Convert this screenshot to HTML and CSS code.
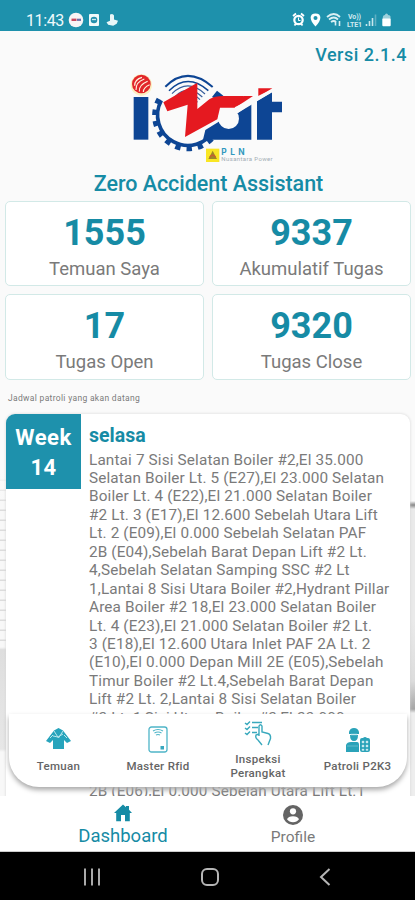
FILE: index.html
```html
<!DOCTYPE html>
<html lang="id">
<head>
<meta charset="utf-8">
<meta name="viewport" content="width=device-width, initial-scale=1">
<title>Zero Accident Assistant</title>
<link rel="stylesheet" href="styles.css">
</head>
<body>
<header class="status">
  <span class="time">11:43</span>
  <svg class="status-left" width="52" height="16" viewBox="0 0 52 16">
    <circle cx="8" cy="8" r="7.3" fill="#f7f4f5"/>
    <path d="M3.5 7.8h5" stroke="#c6485c" stroke-width="2.4"/><path d="M9 7.8h4" stroke="#6d6da8" stroke-width="2.2"/>
    <rect x="21" y="2" width="10" height="12" rx="1" fill="#f2fafb"/>
    <circle cx="26" cy="8" r="3.3" fill="#2590ad"/><path d="M24 7.5h4" stroke="#cceaf0" stroke-width="1.3"/>
    <path d="M42 2.500q3-1.500 4 1v4l4 1.300-1.300 3-3.500 2-5-1-1.700-2.500 3.500-1.500z" fill="#e8f6f8"/>
  </svg>
  <svg class="status-right" width="100" height="16" viewBox="0 0 100 16" fill="none">
    <path d="M1 4l3-2.500M12 4L9 1.500M2.500 13.500l1.500-2M10.500 13.500l-1.500-2" stroke="#fff" stroke-width="1.800"/>
    <circle cx="6.500" cy="8" r="4.200" stroke="#fff" stroke-width="2.200"/><path d="M6.500 5.500v3h2" stroke="#fff"/>
    <path d="M23.500 1.500c-6.500 0-6.500 6.500 0 13 6.500-6.500 6.500-13 0-13z" fill="#fff"/><circle cx="23.500" cy="6" r="2" fill="#1e91ac"/>
    <path d="M35 5q7-6 13 0M37 7.500q5-4 9 0M39 10q3-2 5 0" stroke="#d8eff3" stroke-width="1.800"/><path d="M43.500 9.500v4M47.500 9v5" stroke="#d8eff3" stroke-width="1.600"/>
    <g fill="#d0e9ef" font-family="Roboto, sans-serif" font-weight="700" font-size="7"><text x="56" y="6.500" textLength="13">Vo))</text><text x="55" y="14.500" textLength="15">LTE1</text></g>
    <path d="M74.500 14v-2M77.500 14v-5M80.500 14V6" stroke="#c8e7ed" stroke-width="1.600"/><path d="M83.500 14V2.500" stroke="#5eafc2" stroke-width="1.600"/>
    <path d="M91 4.500q0-1.500 2-1.500 0-1.500 1.500-1.500T96 3q2.500 0 2.500 1.500V7h-8z" fill="#9dd0db"/><rect x="90.300" y="6.500" width="8.400" height="7.800" rx="1" fill="#fff"/>
  </svg>
</header>

<main class="content">
  <p class="version">Versi 2.1.4</p>
  <svg class="logo" width="175" height="105" viewBox="0 0 525 315">
    <circle cx="64" cy="60" r="32" fill="#fbefc0"/>
    <circle cx="64" cy="57" r="28" fill="#e2262a"/>
    <g fill="none" stroke="#fff3de" stroke-width="3.500"><path d="M44 62q0-19 22-25M48 75q-1-24 25-33M58 80q-2-20 25-31M70 81q0-14 19-22"/></g>
    <rect x="41" y="96" width="44" height="128" fill="#0d4594"/>
    <path d="M124 106A89 89 0 0 0 284 194" fill="none" stroke="#0d4594" stroke-width="11"/>
    <path d="M117 102A97 97 0 0 0 291 201" fill="none" stroke="#0d4594" stroke-width="15" stroke-dasharray="16 18"/>
    <path d="M276 96l15-19 19 15-10 12-14-3z" fill="#0d4594"/>
    <g fill="none" stroke="#0d4594" stroke-width="6">
      <path d="M136 65Q202 0 278 66"/><path d="M147 77Q203 22 265 77" stroke-width="4.500"/>
      <g stroke="#375e9c" stroke-width="3.500"><path d="M156 86Q203 39 255 87M166 94Q205 56 247 96M176 100Q206 72 240 104M232 112q-10-17-22-17M230 120q-6-14-18-15"/></g>
    </g>
    <path d="M130 112L232 53V132L268 103Q285 93 310 93H371V103L345 128H300L292 163 195 216 203 119 142 139z" fill="#e51920"/>
    <path d="M256 195L300 168 345 150 394 116V224H249z" fill="#0d4594"/>
    <path d="M411 224V108L456 82V110H486V142H456V224z" fill="#0d4594"/>
    <path d="M371 93h28l-50 33-12-6z" fill="#e51920"/>
    <path d="M415 70h42l-42 26z" fill="#e51920"/>
    <circle cx="326" cy="161" r="31" fill="#fafafa"/>
    <path d="M344 127L461 70v9l-107 64z" fill="#fafafa"/>
    <rect x="258" y="251" width="40" height="40" fill="#f9e624"/>
    <path d="M278 257l13 25h-26z" fill="#9d8728"/><path d="M269 277q9-13 18 0" fill="none" stroke="#c95c31" stroke-width="4"/>
    <text x="304" y="270" font-family="Inter, sans-serif" font-weight="700" font-size="25" textLength="70" fill="#3199bf">PLN</text>
    <text x="304" y="289" font-family="Roboto, sans-serif" font-size="18" textLength="154" fill="#a3adb5">Nusantara Power</text>
  </svg>
  <h1 class="title">Zero Accident Assistant</h1>

  <section class="stats">
    <article class="stat"><strong>1555</strong><span>Temuan Saya</span></article>
    <article class="stat"><strong>9337</strong><span>Akumulatif Tugas</span></article>
    <article class="stat"><strong>17</strong><span>Tugas Open</span></article>
    <article class="stat"><strong>9320</strong><span>Tugas Close</span></article>
  </section>

  <p class="caption">Jadwal patroli yang akan datang</p>

  <section class="schedule">
    <div class="week">Week<br>14</div>
    <div class="detail">
      <h2>selasa</h2>
      <p>Lantai 7 Sisi Selatan Boiler #2,El 35.000<br>Selatan Boiler Lt. 5 (E27),El 23.000 Selatan<br>Boiler Lt. 4 (E22),El 21.000 Selatan Boiler<br>#2 Lt. 3 (E17),El 12.600 Sebelah Utara Lift<br>Lt. 2 (E09),El 0.000 Sebelah Selatan PAF<br>2B (E04),Sebelah Barat Depan Lift #2 Lt.<br>4,Sebelah Selatan Samping SSC #2 Lt<br>1,Lantai 8 Sisi Utara Boiler #2,Hydrant Pillar<br>Area Boiler #2 18,El 23.000 Selatan Boiler<br>Lt. 4 (E23),El 21.000 Selatan Boiler #2 Lt.<br>3 (E18),El 12.600 Utara Inlet PAF 2A Lt. 2<br>(E10),El 0.000 Depan Mill 2E (E05),Sebelah<br>Timur Boiler #2 Lt.4,Sebelah Barat Depan<br>Lift #2 Lt. 2,Lantai 8 Sisi Selatan Boiler<br>#2 Lt. 1,Sisi Utara Boiler #2,El 23.000</p>
      <p class="tail">2B (E06),El 0.000 Sebelah Utara Lift Lt.1</p>
    </div>
  </section>

  <nav class="actions">
    <a class="a-temuan">
      <svg width="27" height="27" viewBox="0 0 27 27"><path d="M9 4.500L13.500 2 18 4.500l8 10.500-4 2-3-3v9H8v-9l-3 3-4-2z" fill="#27a4bc"/><path d="M9 5l4.500 7L18 5M8 10l5 1 5-3M5 12l3-3M22 12l-3-3" fill="none" stroke="#b9e6ec" stroke-width="1"/></svg>
      <span>Temuan</span>
    </a>
    <a class="a-rfid">
      <svg width="20" height="27" viewBox="0 0 20 27" fill="none" stroke="#4fb5c8"><rect x="1" y="1" width="18" height="25" rx="2.500" stroke-width="1.300"/><path d="M5 5q5-3 10 0M6.500 7q3.500-2 7 0M8 9q2-1 4 0" stroke-width="1.100"/><rect x="12.500" y="20" width="3.500" height="3.500" fill="#38a8bf" stroke="none"/></svg>
      <span>Master Rfid</span>
    </a>
    <a class="a-inspeksi">
      <svg width="28" height="27" viewBox="0 0 28 27" fill="none" stroke="#39a9bd" stroke-width="1.400"><path d="M1 3l2 1.500L6 1.500M1 8l2 1.500L6 6.500M1 13l2 1.500L6 11.500M8 2.500h10M8 7.500h6M8 12.500h5"/><path d="M15 16V6q1.500-2.500 3 0v6l6 1.500q3 1 2.500 5L24 25M15 14l-3 1q-1 3 2 5l4 5"/></svg>
      <span>Inspeksi<br>Perangkat</span>
    </a>
    <a class="a-patroli">
      <svg width="26" height="26" viewBox="0 0 26 26" fill="#2ba3b9"><path d="M4 5q1-4 5-4t5 4v2H4zM5 8h8q0 6-4 6T5 8zM1 25v-7q1-3 5-3h6q2 0 2 3v7zM15 13q0-2 2-2h1q2-2 4 0h1q2 0 2 2v10q0 2-2 2h-6q-2 0-2-2z"/><path d="M17 14h2v2h-2zM21 14h2v2h-2zM17 18h2v2h-2zM21 18h2v2h-2zM17 22h2v1.500h-2zM21 22h2v1.500h-2zM2 19h11M6 7h6v1H6z" fill="#d2eef2" stroke="#b9e1e8" stroke-width=".4"/></svg>
      <span>Patroli P2K3</span>
    </a>
  </nav>
</main>

<nav class="tabs">
  <a class="tab active">
    <svg width="20" height="20" viewBox="0 0 20 20"><path d="M10 1.500l3 2.700V3h3v3.800l3 3.200h-2.200v8.300H12V12H8v6.300H3.200V10H1z" fill="#168ba5"/></svg>
    <span>Dashboard</span>
  </a>
  <a class="tab">
    <svg width="22" height="22" viewBox="0 0 22 22"><circle cx="11" cy="11" r="10" fill="#646464"/><circle cx="11" cy="7.300" r="3.100" fill="#fff"/><path d="M5 15.200q1.200-3 6-3t6 3q-2.200 3-6 3t-6-3z" fill="#fff"/></svg>
    <span>Profile</span>
  </a>
</nav>

<footer class="system">
  <svg width="18" height="20" viewBox="0 0 18 20"><path d="M2 1.500v17M9 1.500v17M16 1.500v17" stroke="#aaa" stroke-width="2"/></svg>
  <svg width="20" height="20" viewBox="0 0 20 20"><rect x="2" y="2" width="16" height="16" rx="5" fill="none" stroke="#b5b5b5" stroke-width="2"/></svg>
  <svg width="14" height="20" viewBox="0 0 14 20"><path d="M11.500 2L3 10l8.500 8" fill="none" stroke="#b5b5b5" stroke-width="2"/></svg>
</footer>
</body>
</html>
```

FILE: styles.css
```css
* { box-sizing: border-box; }
body {
  margin: 0;
  height: 900px;
  display: grid;
  grid-template-rows: 31px 765px 56px 48px;
  overflow: hidden;
  font-family: Roboto, "Liberation Sans", sans-serif;
  color: #7a7a7a;
}
h1, h2, p { margin: 0; }

.status {
  display: flex;
  align-items: center;
  padding: 9px 24px 0 26px;
  background: #1e91ac;
  color: #eef9fb;
}
.time { width: 42px; font-size: 16px; line-height: 20px; letter-spacing: -.4px; padding-top: 1px; }
.status-right { margin-left: auto; }

.content {
  position: relative;
  overflow: hidden;
  padding: 0 4px 0 5px;
  background:
    linear-gradient(#fafafa 0 440px, transparent 475px) 0 0 / 7px 100% no-repeat,
    linear-gradient(transparent 616px, #dedede 619px, #e7e7e7 718px, #f8f8f8 721px) 0 0 / 7px 100% no-repeat,
    linear-gradient(#fafafa 470px, #888 474px, #eaeaea 478px 590px, #dcdcdc 650px, #a5a5a5 678px, #eee 682px) 100% 0 / 7px 100% no-repeat,
    repeating-linear-gradient(#f8f8f8 0 8px, #dcdcdc 9px 10px) 0 0 / 7px 100% no-repeat,
    #fafafa;
}
.version {
  height: 40px;
  padding: 12px 5px 0 0;
  text-align: right;
  font-size: 18px;
  line-height: 24px;
  font-weight: 500;
  letter-spacing: .5px;
  color: #168ba5;
}
.logo { display: block; margin: -6px auto 0 115px; }
.title {
  height: 31px;
  text-align: center;
  font-size: 21.500px;
  line-height: 27px;
  font-weight: 500;
  letter-spacing: -.03px;
  color: #168ba5;
}
.stats {
  display: grid;
  grid-template-columns: 199px 199px;
  grid-template-rows: 85px 86px;
  gap: 8px;
}
.stat {
  display: flex;
  flex-direction: column;
  align-items: center;
  border: 1px solid #d2e9e7;
  border-radius: 5px;
  background: #fff;
}
.stat strong { margin-top: 10px; font-size: 36px; line-height: 43px; font-weight: 700; color: #168ba5; }
.stat span { margin-top: 3px; font-size: 18.500px; line-height: 22px; }
.caption { height: 34px; padding: 12px 0 0 3px; font-size: 8.500px; line-height: 13px; letter-spacing: .32px; }

.schedule {
  display: flex;
  width: 404px;
  height: 410px;
  margin-left: 1px;
  border-radius: 9px 9px 0 0;
  background: #fff;
  box-shadow: 0 0 3px #d3d3d3;
}
.week {
  flex: none;
  width: 75px;
  height: 75px;
  padding-top: 9px;
  border-top-left-radius: 9px;
  background: #1e91ac;
  color: #fff;
  text-align: center;
  font-size: 22px;
  line-height: 30px;
  font-weight: 700;
  letter-spacing: .5px;
}
.detail { padding: 10px 0 0 8px; white-space: nowrap; }
.detail h2 { font-size: 19.500px; line-height: 23px; font-weight: 700; color: #168ba5; }
.detail p { margin-top: 3.500px; font-size: 15.300px; line-height: 18.460px; letter-spacing: .15px; }
.detail .tail { margin-top: 55px; }

.actions {
  position: absolute;
  left: 9px;
  top: 683px;
  width: 398px;
  height: 73px;
  display: grid;
  grid-template-columns: 99px 100px 100px 99px;
  border-radius: 0 0 30px 30px;
  background: #fff;
  box-shadow: 0 3px 5px #aaa;
}
.actions a { display: flex; flex-direction: column; align-items: center; }
.actions span { text-align: center; font-size: 11.500px; line-height: 14px; font-weight: 500; letter-spacing: .3px; color: #656565; }
.actions svg { margin-top: 12px; margin-bottom: 6px; }
.actions .a-patroli svg { margin-top: 13px; }
.actions .a-inspeksi svg { margin-top: 6px; margin-bottom: 5px; }

.tabs {
  display: flex;
  padding: 0 38px;
  background: #fff;
  border-bottom: 1px solid #ccc;
}
.tab { width: 170px; display: flex; flex-direction: column; align-items: center; font-size: 15.500px; }
.tab svg { margin-top: 8px; }
.tab span { line-height: 22px; }
.tab.active { color: #168ba5; font-size: 18.500px; }
.tab.active svg { margin-top: 7px; }
.tab.active span { line-height: 26px; }

.system { display: flex; justify-content: space-between; padding: 15px 84px 0 83px; background: #000; }
```
